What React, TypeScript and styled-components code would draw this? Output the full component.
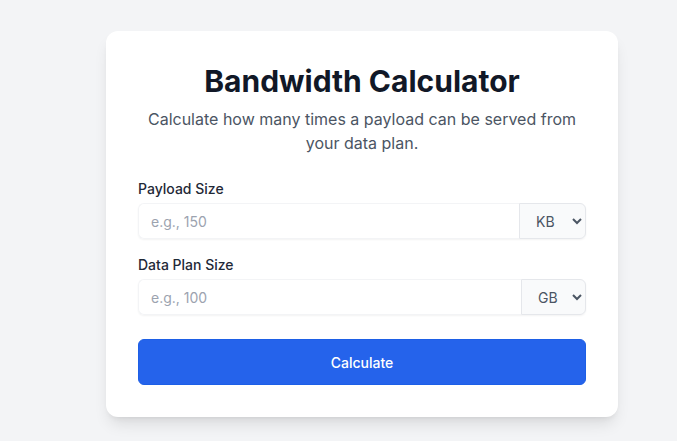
import styled, { createGlobalStyle } from "styled-components";

const GlobalStyle = createGlobalStyle`
  html, body {
    margin: 0;
    padding: 0;
    background: #f3f4f6;
    font-family: "Inter", "Liberation Sans", sans-serif;
  }
`;

const Page = styled.main`
  min-height: 441px;
  box-sizing: border-box;
  padding: 31px 0 0 106px;
`;

const Card = styled.section`
  width: 512px;
  box-sizing: border-box;
  padding: 32px;
  background: #ffffff;
  border-radius: 12px;
  box-shadow: 0 10px 15px -3px rgba(0, 0, 0, 0.1), 0 4px 6px -4px rgba(0, 0, 0, 0.1);
`;

const Title = styled.h1`
  margin: 0;
  text-align: center;
  font-size: 30px;
  line-height: 36px;
  font-weight: 700;
  color: #111827;
`;

const Subtitle = styled.p`
  margin: 8px 0 24px;
  text-align: center;
  font-size: 16px;
  line-height: 24px;
  color: #4b5563;
`;

const Field = styled.div<{ $last?: boolean }>`
  display: flex;
  flex-direction: column;
  margin-bottom: ${(p) => (p.$last ? "24px" : "16px")};
`;

const Label = styled.label`
  font-size: 14px;
  line-height: 20px;
  font-weight: 500;
  color: #1f2937;
  margin-bottom: 4px;
`;

const InputRow = styled.div`
  display: flex;
  height: 36px;
  border-radius: 6px;
  box-shadow: 0 1px 2px 0 rgba(0, 0, 0, 0.05);
`;

const NumberInput = styled.input`
  flex: 1;
  min-width: 0;
  box-sizing: border-box;
  border: 1px solid #f3f4f6;
  border-right: none;
  border-radius: 6px 0 0 6px;
  padding: 0 12px;
  font-family: inherit;
  font-size: 14px;
  color: #111827;
  outline: none;
  &::placeholder {
    color: #9ca3af;
  }
`;

const UnitSelect = styled.select<{ $w: number }>`
  width: ${(p) => p.$w}px;
  box-sizing: border-box;
  border: 1px solid #e5e7eb;
  border-radius: 0 6px 6px 0;
  background: #f9fafb;
  padding: 0 4px 0 12px;
  font-family: inherit;
  font-size: 14px;
  color: #4b5563;
  outline: none;
`;

const Button = styled.button`
  width: 100%;
  height: 46px;
  border: 1px solid #1d5fe6;
  border-radius: 6px;
  background: #2563eb;
  color: #ffffff;
  font-family: inherit;
  font-size: 14px;
  font-weight: 500;
  cursor: pointer;
`;

const App = () => {
  return (
    <>
      <GlobalStyle />
      <Page>
        <Card>
          <Title>Bandwidth Calculator</Title>
          <Subtitle>
            Calculate how many times a payload can be served from your data plan.
          </Subtitle>
          <Field>
            <Label htmlFor="payload">Payload Size</Label>
            <InputRow>
              <NumberInput id="payload" type="number" placeholder="e.g., 150" />
              <UnitSelect $w={67} defaultValue="KB">
                <option>B</option>
                <option>KB</option>
                <option>MB</option>
                <option>GB</option>
              </UnitSelect>
            </InputRow>
          </Field>
          <Field $last>
            <Label htmlFor="plan">Data Plan Size</Label>
            <InputRow>
              <NumberInput id="plan" type="number" placeholder="e.g., 100" />
              <UnitSelect $w={65} defaultValue="GB">
                <option>MB</option>
                <option>GB</option>
                <option>TB</option>
              </UnitSelect>
            </InputRow>
          </Field>
          <Button>Calculate</Button>
        </Card>
      </Page>
    </>
  );
};

export default App;
